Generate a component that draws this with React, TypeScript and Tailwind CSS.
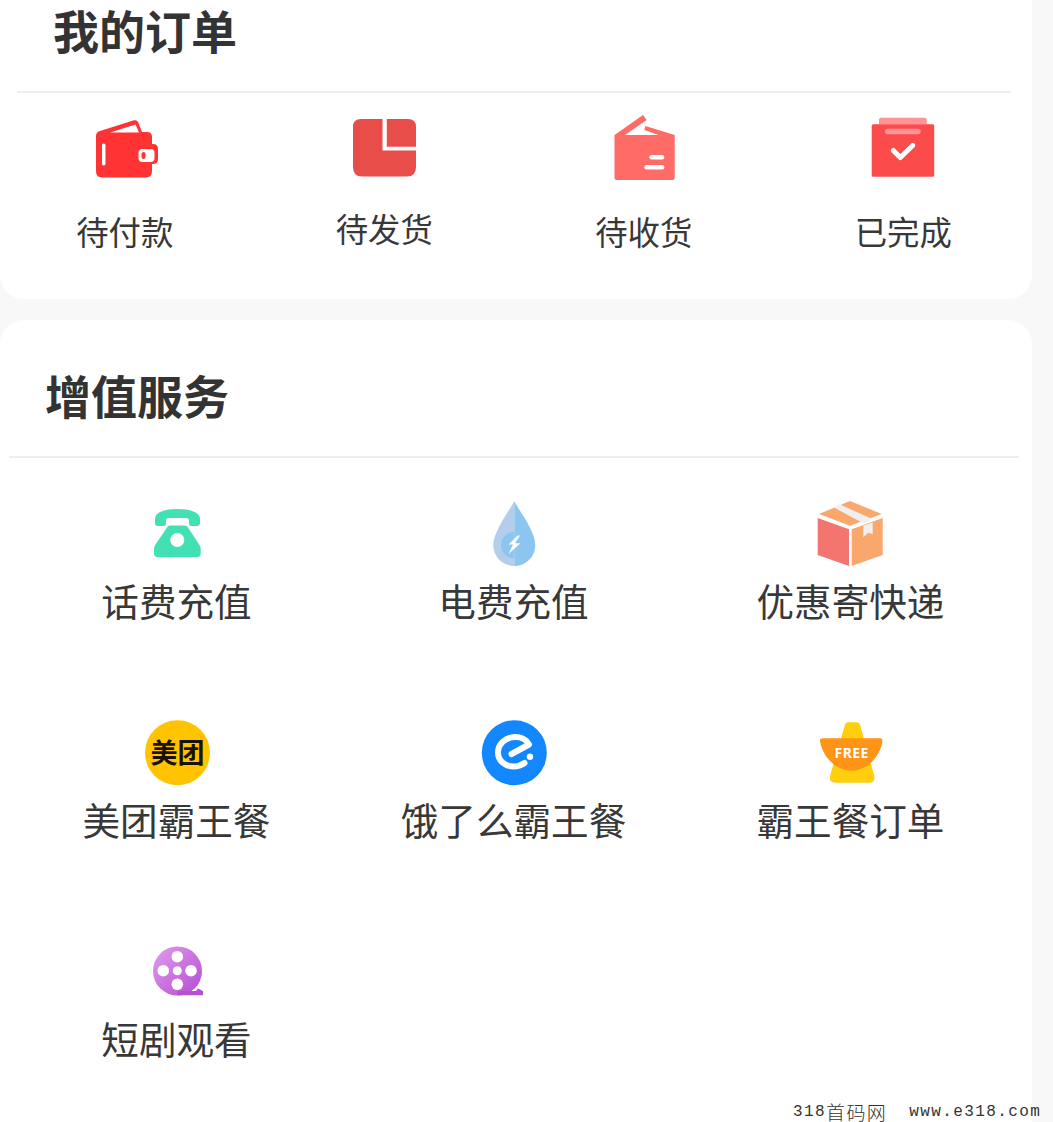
import type { ReactNode } from "react";

const cjk = "font-['Noto_Sans_CJK_SC','Noto_Sans',sans-serif]";

// viewBox values are the icon's place in the page, so shapes can be read straight off the screenshot
function Icon({ box, children }: { box: string; children: ReactNode }) {
	return (
		<svg viewBox={box} className="block h-[70px] w-[70px]" aria-hidden="true">
			{children}
		</svg>
	);
}

const WalletIcon = () => (
	<Icon box="90 115 70 70">
		<path d="M100 131 L134 120.3 Q137 119.6 138 122 L142 132 H147 Q152 132 152 137 V144 H153 Q158 144 158 149 V159 Q158 164 153 164 H152 V171 Q152 177.5 146 177.5 H102 Q96 177.5 96 171 V136 Q96 132 100 131 Z" fill="#ff3333" />
		<path d="M110 132.5 L135.5 124.5 L139 132.5 Z" fill="#fff" />
		<rect x="102" y="143.5" width="3.5" height="22" rx="1.75" fill="#fff" />
		<rect x="138.5" y="149" width="16" height="13" rx="4" fill="#fff" />
		<rect x="141.5" y="152" width="4" height="7" rx="2" fill="#ff3333" />
	</Icon>
);

const ParcelIcon = () => (
	<Icon box="349 115 70 70">
		<path d="M361 119 H382.5 V150.5 H416 V167 Q416 176.5 407 176.5 H362 Q353 176.5 353 167 V127 Q353 119 361 119 Z" fill="#e84d4a" />
		<path d="M386.8 119 H408 Q416 119 416 127 V146.8 H386.8 Z" fill="#e84d4a" />
	</Icon>
);

const OpenBoxIcon = () => (
	<Icon box="608 115 70 70">
		<path d="M613.5 135 L642 115 L645.7 120 L624 135 H657.5 L643.3 130 L644.3 126 L673.7 135 V178 Q673.7 180 671.7 180 H615.5 Q613.5 180 613.5 178 Z" fill="#ff6b66" />
		<rect x="648.3" y="155" width="15" height="4.5" rx="2.25" fill="#fff" />
		<rect x="643.3" y="165" width="20" height="4.5" rx="2.25" fill="#fff" />
	</Icon>
);

const DoneIcon = () => (
	<Icon box="868 115 70 70">
		<path d="M879 124.5 V119.5 Q879 117.7 881 117.7 H924.7 Q926.7 117.7 926.7 119.5 V124.5 Z" fill="#ff9496" />
		<rect x="871.7" y="124.3" width="62.5" height="52.5" rx="1.5" fill="#fb4b4b" />
		<rect x="885" y="128.7" width="35.7" height="5.6" rx="2.8" fill="#ff9496" />
		<path d="M893.3 150.5 L900.3 157.5 L912.8 145.5" fill="none" stroke="#fff" strokeWidth="5" strokeLinecap="round" strokeLinejoin="round" />
	</Icon>
);

const PhoneIcon = () => (
	<Icon box="142 498 70 70">
		<path d="M155 519 C155 512 165 509 177.5 509 C190 509 200 512 200 519 V523 Q200 526 197 526 H191.5 Q189 526 189 523 V520.5 Q189 518 186 518 H169 Q166 518 166 520.5 V523 Q166 526 163.5 526 H158 Q155 526 155 523 Z" fill="#43e0b3" />
		<path fillRule="evenodd" d="M170 525.5 H185 Q187 525.5 188 527.5 L199.5 545 Q200.7 547 200.7 549 V553 Q200.7 557.3 196 557.3 H158.7 Q154 557.3 154 553 V549 Q154 547 155.2 545 L167 527.5 Q168 525.5 170 525.5 Z M177.3 533 A7 7 0 1 0 177.3 547 A7 7 0 1 0 177.3 533 Z" fill="#43e0b3" />
	</Icon>
);

const DropIcon = () => (
	<Icon box="479 498 70 70">
		<path d="M514.3 501 C510 510 493.3 531 493.3 545 C493.3 557 503 566 514.3 566 Z" fill="#b3cdea" />
		<path d="M514.3 501 C518.6 510 535.3 531 535.3 545 C535.3 557 525.6 566 514.3 566 Z" fill="#8cc6f0" />
		<path d="M514.3 531.7 A13.3 13.3 0 0 0 514.3 558.3 Z" fill="#8cc6f0" />
		<path d="M517.5 535.5 L508.5 544.5 H513 L508.5 554 L520.5 543.3 H515 L520 535.5 Z" fill="#fff" />
	</Icon>
);

const PackageIcon = () => (
	<Icon box="816 498 70 70">
		<path d="M850 501 L881.7 514 L850 525.7 L819 514 Z" fill="#f9a76c" />
		<path d="M817.7 518 L849 529.3 V566 L817.7 555 Z" fill="#f47570" />
		<path d="M851.7 529.3 L882.7 518 V555 L851.7 566 Z" fill="#f9a76c" />
		<path d="M833 507 L840 504.5 L872.7 519.3 L863.3 523.3 Z" fill="#efefef" />
		<path d="M863.3 525.7 L872.7 522.3 V534 L868.3 532.7 L863.3 537.3 Z" fill="#efefef" />
	</Icon>
);

const MeituanIcon = () => (
	<Icon box="142 717 70 70">
		<circle cx="177.5" cy="752.8" r="32.5" fill="#ffc300" />
		<text x="177.5" y="762.5" textAnchor="middle" fontSize="27" fontWeight="700" fill="#1a1200" fontFamily="'Noto Sans CJK SC', sans-serif">
			美团
		</text>
	</Icon>
);

const ElemeIcon = () => (
	<Icon box="479 717 70 70">
		<circle cx="514.3" cy="752.8" r="32.5" fill="#1287ff" />
		<path d="M511.5 754 L529 744.5 C526.5 739.5 520.5 736.7 514.5 737 C505 737.5 498 744.5 498 752.5 C498 760.5 505 766.5 513.5 766.5 C517.5 766.5 521 765.5 524.5 763" fill="none" stroke="#fff" strokeWidth="6" strokeLinecap="round" strokeLinejoin="round" />
		<circle cx="530" cy="756.7" r="3.2" fill="#fff" />
	</Icon>
);

const FreeIcon = () => (
	<Icon box="816 717 70 70">
		<path d="M848.5 722.3 H856.5 Q859.5 722.3 860.3 725.5 L874.3 776 Q875.5 782.7 869 782.7 H835 Q829 782.7 830 776 L844.7 725.5 Q845.5 722.3 848.5 722.3 Z" fill="#ffcf0f" />
		<path d="M823 738.3 H880 Q883 738.3 882.5 741 C880 757 867 770.7 851.5 770.7 C836 770.7 822.5 757 820 741 Q819.7 738.3 823 738.3 Z" fill="#ff9417" />
		<text x="851.7" y="758.3" textAnchor="middle" fontSize="14" fontWeight="700" letterSpacing="0.4" fill="#fff" fontFamily="'Noto Sans', sans-serif">
			FREE
		</text>
	</Icon>
);

const FilmIcon = () => (
	<Icon box="142 936 70 70">
		<defs>
			<linearGradient id="film" x1="0" y1="0" x2="1" y2="1">
				<stop offset="0" stopColor="#e29cf0" />
				<stop offset="1" stopColor="#b34ccf" />
			</linearGradient>
		</defs>
		<circle cx="177.5" cy="971" r="24.5" fill="url(#film)" />
		<path d="M177.5 991 H196 L198 988.5 L203 991 V995.2 H177.5 Z" fill="#b84fd2" />
		<circle cx="177.3" cy="956.7" r="5.8" fill="#fff" />
		<circle cx="163.3" cy="970.7" r="5.8" fill="#fff" />
		<circle cx="177.3" cy="970.7" r="4.5" fill="#fff" />
		<circle cx="191" cy="970.7" r="5.8" fill="#fff" />
		<circle cx="177.3" cy="984.3" r="5.8" fill="#fff" />
	</Icon>
);

const orders = [
	{ label: "待付款", icon: <WalletIcon />, gap: "mt-[26px]" },
	{ label: "待发货", icon: <ParcelIcon />, gap: "mt-[23px]" },
	{ label: "待收货", icon: <OpenBoxIcon />, gap: "mt-[26px]" },
	{ label: "已完成", icon: <DoneIcon />, gap: "mt-[26px]" },
];

const services = [
	{ label: "话费充值", icon: <PhoneIcon /> },
	{ label: "电费充值", icon: <DropIcon /> },
	{ label: "优惠寄快递", icon: <PackageIcon /> },
	{ label: "美团霸王餐", icon: <MeituanIcon /> },
	{ label: "饿了么霸王餐", icon: <ElemeIcon /> },
	{ label: "霸王餐订单", icon: <FreeIcon /> },
	{ label: "短剧观看", icon: <FilmIcon /> },
];

export default function App() {
	return (
		<div className={`relative h-[1122px] w-[1053px] overflow-hidden bg-[#f8f8f8] text-[#383838] ${cjk}`}>
			{/* order card, its top is cut off by the screenshot */}
			<section className="h-[299px] w-[1032px] rounded-b-[24px] bg-white">
				<div className="ml-[17px] mr-[21px] h-[93px] border-b-2 border-[#eee] pl-9">
					<h2 className="text-[46px] leading-[58px] font-bold text-[#333]">我的订单</h2>
				</div>
				<div className="-ml-[5px] mt-[22px] grid w-[1038px] grid-cols-4">
					{orders.map((item) => (
						<div key={item.label} className="flex flex-col items-center">
							{item.icon}
							<span className={`${item.gap} text-[32.4px] leading-10`}>{item.label}</span>
						</div>
					))}
				</div>
			</section>

			{/* services card */}
			<section className="mt-[21px] h-[900px] w-[1032px] rounded-t-[24px] bg-white">
				<div className="ml-[9px] mr-[13px] h-[138px] border-b-2 border-[#eee] pl-9 pt-[42px]">
					<h2 className="text-[46px] leading-[64px] font-bold text-[#333]">增值服务</h2>
				</div>
				<div className="ml-2 mt-10 grid w-[1011px] grid-cols-3 auto-rows-[219px]">
					{services.map((item) => (
						<div key={item.label} className="flex flex-col items-center">
							{item.icon}
							<span className="mt-2 text-[37.6px] leading-[48px]">{item.label}</span>
						</div>
					))}
				</div>
			</section>

			{/* site watermark */}
			<div className="absolute left-[793px] top-[1096px] flex h-[32px] items-center whitespace-pre font-['Liberation_Mono',monospace] text-[16px] tracking-[1.4px] text-[#333]">
				<span>318</span>
				<span className="text-[19px] font-['Noto_Sans_CJK_SC',sans-serif] font-light">首码网</span>
				<span className="ml-[22px]">www.e318.com</span>
			</div>
		</div>
	);
}
